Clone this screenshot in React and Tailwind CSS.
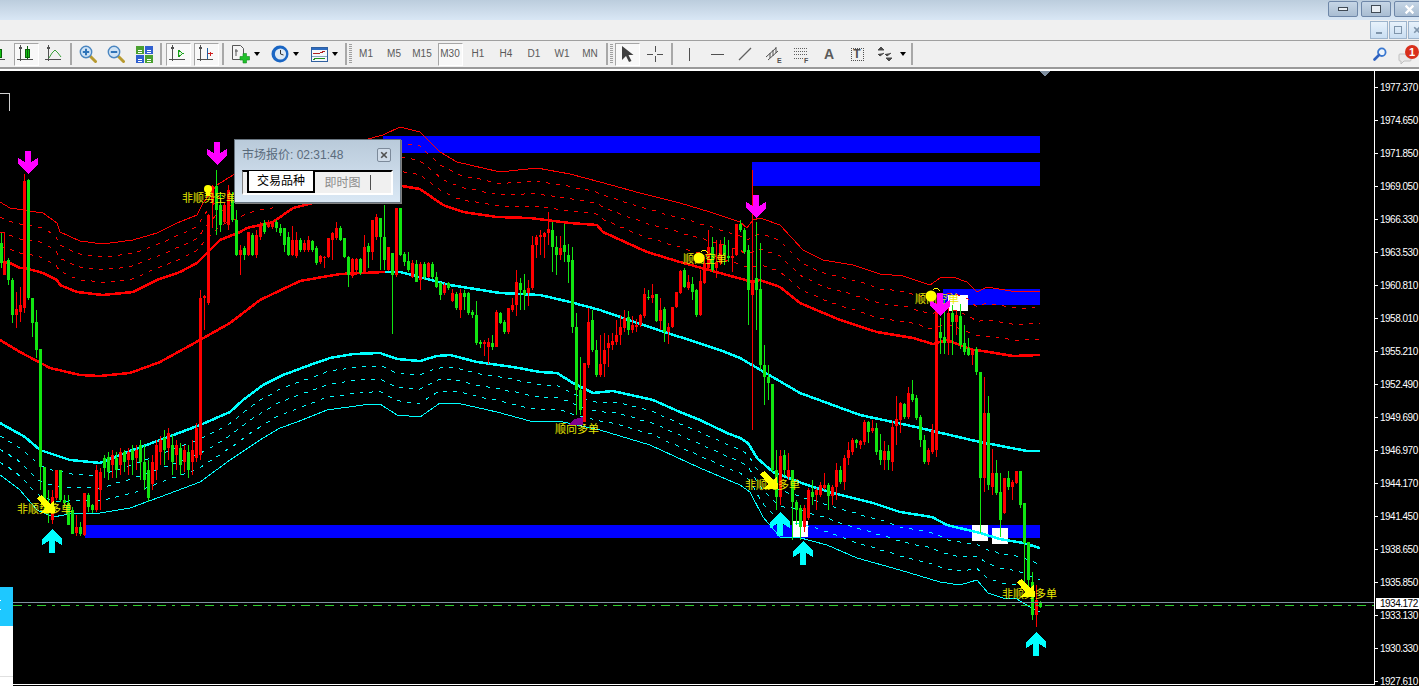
const prices = [
  '1977.370', '1974.650', '1971.850', '1969.050', '1966.330', '1963.530', '1960.810',
  '1958.010', '1955.210', '1952.490', '1949.690', '1946.970', '1944.170', '1941.450',
  '1938.650', '1935.850', '1933.130', '1930.330', '1927.610',
]

// band curves in page coordinates
const redThin = [[0,202],[10,208],[43,213],[57,223],[60,232],[80,241],[103,244],[133,240],[157,233],[177,223],[197,215],[203,203],[217,185],[233,175],[300,155],[364,140],[383,135],[400,127],[420,132],[440,152],[457,162],[500,172],[537,168],[570,174],[600,182],[640,193],[680,203],[710,212],[740,222],[747,228],[753,220],[760,218],[780,225],[803,250],[823,260],[853,265],[880,274],[903,276],[930,285],[940,278],[953,277],[967,282],[977,292],[987,287],[1017,292],[1040,291]]
const redThick = [[0,262],[10,263],[20,268],[25,268],[43,273],[57,280],[60,285],[77,292],[103,295],[133,292],[157,280],[180,272],[197,263],[207,253],[220,240],[240,232],[247,228],[273,222],[293,208],[313,203],[360,192],[402,186],[420,189],[443,205],[463,212],[497,217],[530,218],[570,223],[597,225],[603,232],[647,252],[680,262],[727,275],[753,282],[760,280],[780,287],[800,303],[840,320],[877,332],[913,338],[933,344],[947,340],[973,350],[983,351],[1013,356],[1040,355]]
const midRed = [[0,340],[20,352],[50,368],[80,375],[100,376],[130,373],[160,362],[200,340],[230,323],[260,300],[300,281],[340,274],[385,272]]
const midCyan = [[385,272],[400,272],[450,285],[500,293],[540,295],[570,302],[600,310],[640,324],[680,337],[720,350],[740,358],[800,393],[860,415],[907,425],[980,442],[1027,451],[1040,451]]
const cyanThick = [[0,423],[25,437],[40,450],[70,460],[100,463],[130,451],[160,440],[200,425],[230,412],[243,400],[263,385],[283,375],[310,365],[330,358],[353,354],[380,353],[397,359],[420,361],[437,356],[450,355],[477,362],[513,367],[540,372],[557,373],[573,383],[593,393],[613,391],[653,400],[680,412],[700,420],[727,433],[740,438],[748,443],[757,458],[773,472],[807,485],[833,493],[873,503],[900,512],[932,517],[947,525],[980,533],[1000,539],[1023,543],[1040,548]]
const cyanThin = [[0,475],[7,480],[20,490],[37,510],[53,517],[75,513],[100,513],[130,508],[160,497],[200,482],[230,460],[263,438],[280,428],[297,422],[327,410],[363,405],[380,404],[397,415],[420,417],[440,403],[457,403],[497,412],[530,421],[563,422],[600,430],[650,445],[700,468],[740,485],[750,492],[763,517],[780,537],[797,537],[827,545],[857,558],[900,570],[940,582],[960,585],[977,580],[988,593],[1003,598],[1017,599],[1030,607],[1040,612]]

// [x, green?, wick top, body top, body bottom, wick bottom]
const candles = [
  [1,1,233,243,263,268],[4,0,232,262,275,275],[8,1,258,260,280,285],[12,1,278,280,315,323],[16,0,292,309,315,328],[20,0,287,305,312,322],[24,0,174,181,308,313],[28,1,179,180,298,300],[32,1,298,298,323,337],[36,1,310,322,350,358],
  [40,1,349,349,467,490],[44,1,467,467,505,510],[48,1,490,505,513,523],[52,0,490,497,520,524],[56,0,470,470,498,500],[60,1,470,470,500,502],[64,1,495,500,503,507],[68,1,495,503,525,525],[72,1,507,510,534,534],[76,0,515,527,533,536],[80,1,522,527,534,536],[84,0,493,493,535,536],[88,1,493,495,507,512],[92,1,504,505,510,513],[96,0,465,470,510,512],
  [100,0,468,472,490,510],[104,1,455,458,468,478],[108,1,452,457,472,480],[112,0,450,455,465,478],[116,1,452,458,470,478],[120,0,448,452,465,475],[124,1,450,452,462,472],[128,0,448,452,460,475],[132,1,445,450,460,475],[136,0,445,450,458,470],[140,1,440,445,462,480],[144,1,445,462,480,490],[148,1,460,470,498,502],[152,0,455,462,484,490],[156,0,440,445,470,480],[160,0,436,440,452,465],[164,1,430,438,450,465],[168,0,428,433,448,460],[172,1,435,445,462,475],[176,0,440,445,455,470],[180,1,443,448,465,475],[184,0,445,450,462,472],[188,1,445,452,470,478],[192,0,440,450,462,475],[196,0,423,428,458,462],
  [200,0,290,298,455,460],[204,0,295,296,298,330],[208,0,214,215,303,305],[212,0,185,186,203,228],[216,1,170,186,210,235],[220,1,192,205,225,232],[224,0,203,205,222,224],[228,0,185,190,225,230],[232,1,192,200,220,222],[236,1,210,220,255,256],[240,0,245,250,255,275],[244,1,246,248,255,260],[248,0,232,232,255,256],[252,1,233,235,255,256],[256,0,230,235,255,258],[260,0,222,225,237,240],[264,1,220,223,232,234],[268,0,220,222,227,228],[272,0,222,223,227,229],[276,1,220,222,228,232],[280,1,224,228,233,236],[284,1,228,228,245,252],[288,1,232,237,255,256],[292,0,226,240,255,256],[296,0,232,240,256,258],[300,1,238,240,250,252],[304,0,240,243,250,252],[308,0,236,240,250,252],[312,1,240,241,250,252],[316,1,246,248,263,265],[320,0,255,256,262,264],[324,0,256,257,258,268],[328,0,238,238,257,258],[332,0,232,233,240,260],[336,0,222,228,238,240],[340,1,226,228,240,241],[344,1,238,238,257,258],[348,1,256,257,275,287],[352,0,258,259,276,278],[356,0,258,259,270,272],[360,1,258,259,273,275],[364,0,235,247,272,273],[368,1,243,246,252,268],[372,0,220,220,252,260],[376,0,214,217,237,240],[380,1,218,218,237,270],[384,1,205,237,260,270],[388,0,247,247,270,271],[392,1,253,253,275,334],[396,0,208,208,275,277],[400,1,208,208,255,256],[404,1,252,254,262,266],[408,1,252,261,270,272],[412,0,260,263,277,278],[416,1,260,264,282,282],[420,0,262,264,280,290],[424,1,262,264,277,280],[428,0,262,263,277,278],[432,1,262,264,277,279],[436,1,272,277,287,288],[440,1,282,283,295,300],[444,0,283,285,293,295],[448,1,282,283,288,290],[452,0,289,293,301,302],[456,1,292,294,308,310],[460,0,289,293,310,318],[464,1,290,293,297,310],[468,1,292,293,313,315],[472,1,310,312,315,318],[476,1,301,315,343,345],[480,1,340,342,344,348],[484,0,340,342,344,356],[488,0,338,342,347,364],[492,1,335,343,347,350],[496,0,310,312,347,347],[500,1,312,313,323,324],[504,1,320,322,332,334],[508,0,308,308,332,334],[512,0,298,305,310,312],[516,0,270,282,305,316],[520,1,278,283,290,310],[524,1,274,290,295,310],[528,0,280,288,293,306],[532,0,236,245,288,290],[536,0,235,237,245,258],[540,0,230,235,237,255],[544,0,232,233,237,258],[548,0,212,229,233,245],[552,1,222,230,247,272],[556,1,236,247,255,275],[560,0,236,248,255,260],[564,1,224,245,252,262],[568,1,244,255,262,283],
  [572,1,247,260,327,333],[576,1,313,327,390,415],[580,1,357,390,410,415],[584,0,363,363,422,422],[588,0,308,322,365,368],[592,1,310,320,350,352],[596,1,340,350,375,377],[600,0,335,364,375,377],[604,0,333,350,364,377],[608,0,335,343,348,367],[612,0,333,341,345,350],[616,0,320,335,342,345],[620,0,315,327,335,345],[624,0,310,318,328,332],[628,1,311,317,330,335],[632,0,316,325,330,333],[636,0,319,325,327,332],[640,0,314,315,325,327],[644,0,288,294,316,318],[648,1,290,297,298,300],[652,0,284,295,298,303],[656,1,294,294,321,322],[660,0,298,310,321,330],[664,1,307,309,332,342],[668,0,323,327,332,344],[672,0,307,307,327,328],[676,0,292,292,307,308],[680,0,270,271,293,294],[684,1,268,270,287,288],[688,0,275,282,288,290],[692,1,277,284,292,300],[696,1,289,290,315,317],[700,0,270,281,315,316],[704,0,257,263,283,284],[708,0,230,247,268,270],[712,1,237,247,270,272],[716,0,240,262,268,278],[720,0,240,244,263,265],[724,1,237,245,255,265],[728,1,240,256,258,262],[732,0,248,256,258,272],[736,0,224,224,255,256],[740,1,220,224,230,232],[744,1,228,230,252,254],[748,1,245,250,290,325],[752,0,170,280,295,430],[756,1,222,278,290,330],[760,1,243,289,365,370],[764,1,345,365,377,405],[768,1,365,377,383,400],[772,1,384,384,470,472],[776,1,450,470,497,510],[780,0,450,456,497,505],[784,1,450,455,470,476],[788,0,453,470,477,480],[792,1,470,470,502,540],[796,1,500,502,510,525],[800,1,505,508,527,540],[804,0,505,508,527,532],[808,0,488,490,518,520],[812,1,480,492,497,505],[816,0,488,490,495,510],[820,0,482,485,495,497],[824,0,473,485,488,490],[828,1,483,485,496,510],[832,0,485,487,496,505],[836,0,463,470,487,500],[840,1,466,470,482,484],[844,0,455,458,482,490],[848,0,442,450,458,465],[852,0,438,440,452,455],[856,1,439,440,443,448],[860,0,440,441,445,449],[864,0,420,422,442,445],[868,1,421,422,432,443],[872,0,420,428,431,433],[876,1,423,428,452,455],[880,1,434,450,460,465],[884,0,441,451,460,470],[888,1,445,451,460,470],[892,0,421,427,462,471],[896,0,396,419,426,445],[900,0,402,403,420,433],[904,1,403,404,417,419],[908,0,387,393,417,419],[912,1,380,394,400,402],[916,1,395,398,418,420],[920,1,415,417,440,447],[924,1,435,440,462,464],[928,0,448,450,462,465],[932,0,424,430,452,454],[936,0,303,307,450,457],
  [940,1,318,332,338,354],[944,1,300,337,343,354],[948,0,306,313,343,355],[952,1,305,313,322,355],[956,0,310,315,322,335],[960,1,304,316,345,349],[964,1,325,343,352,355],[968,1,338,348,355,356],[972,0,348,350,355,365],[976,1,347,349,372,375],[980,1,372,372,478,533],[984,0,377,413,478,492],[988,1,396,413,485,490],[992,0,449,473,487,495],[996,1,460,473,493,495],[1000,1,473,492,520,537],[1004,0,478,478,513,514],[1008,1,471,478,487,490],[1012,0,480,482,487,500],[1016,0,471,471,483,484],[1020,1,471,471,505,508],[1024,1,503,503,543,590],[1028,1,542,542,580,597],[1032,1,572,582,615,620],[1036,0,585,600,615,627],[1040,1,601,603,607,608],
]

const signals = [
  ['非顺势多单', 17, 513],
  ['非顺势空单', 182, 202],
  ['顺向空单', 683, 263],
  ['顺向多单', 555, 433],
  ['非顺势多单', 745, 489],
  ['顺向空单', 915, 303],
  ['非顺势多单', 1002, 598],
]

const toPts = (curve) => curve.map((p) => p.join(',')).join(' ')

const yAt = (curve, x) => {
  for (let i = 1; i < curve.length; i++) {
    if (x <= curve[i][0]) {
      const [x0, y0] = curve[i - 1]
      const [x1, y1] = curve[i]
      return y0 + ((y1 - y0) * (x - x0)) / (x1 - x0)
    }
  }
  return curve[curve.length - 1][1]
}

// dashed levels sit evenly between the thin and the thick line
const between = (a, b, t) => {
  const out = []
  for (let x = 0; x <= 1040; x += 4) out.push([x, Math.round(yAt(a, x) + (yAt(b, x) - yAt(a, x)) * t)])
  return out
}

const ArrowDown = ({ c, t }) => (
  <polygon fill="#ff00ff" points={`${c - 3},${t} ${c + 3},${t} ${c + 3},${t + 11} ${c + 10},${t + 7} ${c + 10},${t + 13} ${c},${t + 23} ${c - 10},${t + 13} ${c - 10},${t + 7} ${c - 3},${t + 11}`} />
)

const ArrowUp = ({ c, t }) => (
  <polygon fill="#00ffff" points={`${c - 3},${t + 24} ${c + 3},${t + 24} ${c + 3},${t + 12} ${c + 10},${t + 16} ${c + 10},${t + 10} ${c},${t} ${c - 10},${t + 10} ${c - 10},${t + 16} ${c - 3},${t + 12}`} />
)

const FatArrow = ({ x, y }) => (
  <polygon fill="#ffff00" points={`${x - 18},${y - 15} ${x - 13},${y - 18} ${x - 5},${y - 9} ${x - 1},${y - 13} ${x},${y} ${x - 15},${y} ${x - 10},${y - 5}`} />
)

const Chart = () => (
  <svg viewBox="0 71 1374 613" shapeRendering="crispEdges" className="block w-[1374px] h-[613px]">
    <rect x="383" y="136" width="657" height="17" fill="#0000ff" />
    <rect x="752" y="162" width="288" height="24" fill="#0000ff" />
    <rect x="943" y="289" width="97" height="16" fill="#0000ff" />
    <rect x="85" y="525" width="955" height="13" fill="#0000ff" />
    <rect x="792" y="521" width="16" height="16" fill="#fff" />
    <rect x="972" y="525" width="16" height="16" fill="#fff" />
    <rect x="992" y="528" width="16" height="16" fill="#fff" />
    <rect x="948" y="295" width="20" height="16" fill="#fff" />

    <path d="M0 93.5H9.5V111" fill="none" stroke="#d0d0d0" />
    <polygon points="1040,71 1050,71 1045,77" fill="#7f8fa0" />

    <polyline points={toPts(redThin)} fill="none" stroke="#ff0000" />
    <polyline points={toPts(between(redThin, redThick, 0.25))} fill="none" stroke="#ff0000" strokeDasharray="4 6" />
    <polyline points={toPts(between(redThin, redThick, 0.5))} fill="none" stroke="#ff0000" strokeDasharray="4 6" />
    <polyline points={toPts(between(redThin, redThick, 0.75))} fill="none" stroke="#ff0000" strokeDasharray="4 6" />
    <polyline points={toPts(redThick)} fill="none" stroke="#ff0000" strokeWidth="2.5" />
    <polyline points={toPts(midRed)} fill="none" stroke="#ff0000" strokeWidth="2.5" />
    <polyline points={toPts(midCyan)} fill="none" stroke="#00ffff" strokeWidth="2.5" />
    <polyline points={toPts(cyanThick)} fill="none" stroke="#00ffff" strokeWidth="2.5" />
    <polyline points={toPts(between(cyanThick, cyanThin, 0.25))} fill="none" stroke="#00ffff" strokeDasharray="4 6" />
    <polyline points={toPts(between(cyanThick, cyanThin, 0.5))} fill="none" stroke="#00ffff" strokeDasharray="4 6" />
    <polyline points={toPts(between(cyanThick, cyanThin, 0.75))} fill="none" stroke="#00ffff" strokeDasharray="4 6" />
    <polyline points={toPts(cyanThin)} fill="none" stroke="#00ffff" />

    {candles.map(([x, up, h, t, b, l]) => (
      <g key={x} fill={up ? '#12e612' : '#ff0000'}>
        <rect x={x} y={h} width="1" height={l - h} />
        <rect x={x - 1} y={t} width="3" height={Math.max(b - t, 1)} />
      </g>
    ))}

    <line x1="13" y1="602.5" x2="1374" y2="602.5" stroke="#8090a0" />
    <line x1="13" y1="605.5" x2="1374" y2="605.5" stroke="#32cd32" strokeDasharray="9 6 3 6" />

    {signals.map(([label, x, y]) => (
      <text key={x} x={x} y={y} fontSize="11" fill="#e8e800" shapeRendering="auto">{label}</text>
    ))}

    <polygon points="568,425 575,419 583,417 583,425" fill="#800090" />
    <ArrowDown c={28} t={151} />
    <ArrowDown c={217} t={142} />
    <ArrowDown c={756} t={195} />
    <ArrowDown c={940} t={293} />
    <ArrowUp c={52} t={529} />
    <ArrowUp c={780} t={512} />
    <ArrowUp c={803} t={541} />
    <ArrowUp c={1036} t={632} />
    <FatArrow x={55} y={513} />
    <FatArrow x={778} y={489} />
    <FatArrow x={1035} y={597} />
    <circle cx="699" cy="258" r="5.5" fill="#ffff00" shapeRendering="auto" />
    <circle cx="931" cy="296" r="5.5" fill="#ffff00" shapeRendering="auto" />
    <path d="M701 252q4-4 7 1M933 290q4-4 7 1" fill="none" stroke="#ffff00" />
    <circle cx="208" cy="189" r="4" fill="#ffff00" shapeRendering="auto" />
    <rect x="206" y="192" width="4" height="4" fill="#ffff00" />
  </svg>
)

const Axes = ({ children }) => (
  <svg viewBox="0 0 18 18" className="w-[18px] h-[18px]" shapeRendering="crispEdges">
    <path d="M3.5 1V16M0 14.5H16M2 3.5l1.5-2.5 1.5 2.5" fill="none" stroke="#505050" />
    {children}
  </svg>
)

const CandleIcon = () => (
  <Axes>
    <rect x="8" y="4" width="4" height="8" fill="#12c012" stroke="#0a600a" />
    <path d="M10 1V14" stroke="#0a600a" />
  </Axes>
)

const LineIcon = () => (
  <Axes>
    <path d="M4 13L7 8 10 5 13 8 16 12" fill="none" stroke="#38a038" strokeWidth="1" shapeRendering="auto" />
  </Axes>
)

const AutoScrollIcon = () => (
  <Axes>
    <polygon points="9,5 9,12 14,8.5" fill="#d8f0d8" stroke="#18a018" />
  </Axes>
)

const ShiftIcon = () => (
  <Axes>
    <path d="M10.5 3V14" stroke="#2060a0" />
    <path d="M11 8.5H16M13 6.5V10.5" stroke="#d02020" />
  </Axes>
)

const ZoomIcon = ({ plus }) => (
  <svg viewBox="0 0 18 18" className="w-[18px] h-[18px]">
    <path d="M11 11l5.5 5.5" stroke="#b89a30" strokeWidth="3" strokeLinecap="round" />
    <circle cx="7" cy="7" r="5.7" fill="#cfe3f5" stroke="#4a86c0" strokeWidth="1.4" />
    <path d={plus ? 'M3.8 7h6.4M7 3.8v6.4' : 'M3.8 7h6.4'} stroke="#2f74b8" strokeWidth="2" />
  </svg>
)

const TileIcon = () => (
  <svg viewBox="0 0 17 17" className="w-[17px] h-[17px]" shapeRendering="crispEdges">
    <rect x="0" y="0" width="8" height="8" fill="#4aa030" />
    <rect x="9" y="0" width="8" height="8" fill="#3060d0" />
    <rect x="0" y="9" width="8" height="8" fill="#3060d0" />
    <rect x="9" y="9" width="8" height="8" fill="#4aa030" />
    <path d="M2 4h4M2 6h4M11 4h4M11 6h4M2 13h4M2 15h4M11 13h4M11 15h4" stroke="#fff" />
  </svg>
)

const NewOrderIcon = () => (
  <svg viewBox="0 0 20 20" className="w-5 h-5">
    <path d="M1.5 1.5h8l3 3v11h-11z" fill="#f4f4f4" stroke="#555" />
    <path d="M5 5v7M4 7h3" stroke="#555" fill="none" />
    <path d="M9 12.5h3v-3h3.5v3h3v3.5h-3v3h-3.5v-3h-3z" fill="#1fc02a" stroke="#128a1b" strokeWidth="0.6" />
  </svg>
)

const ClockIcon = () => (
  <svg viewBox="0 0 18 18" className="w-[18px] h-[18px]">
    <circle cx="9" cy="9" r="8.5" fill="#1a66c4" />
    <circle cx="9.5" cy="9" r="5.6" fill="#dde9f4" />
    <path d="M9.5 5v4l3 1" fill="none" stroke="#333" />
  </svg>
)

const TemplateIcon = () => (
  <svg viewBox="0 0 17 15" className="w-[17px] h-[15px]" shapeRendering="crispEdges">
    <rect x="0.5" y="0.5" width="16" height="14" fill="#f4f8fc" stroke="#3060a0" />
    <rect x="1" y="1" width="15" height="2" fill="#2e6cc0" />
    <path d="M2 7l4-1 3 0 5-2" fill="none" stroke="#b02020" />
    <path d="M1 9h15" stroke="#8aa4c0" />
    <path d="M2 13l3-2 3 1 3-1 3 1" fill="none" stroke="#209020" />
  </svg>
)

const CloseMark = ({ color, size }) => (
  <svg viewBox="0 0 10 10" width={size} height={size} className="flex-none">
    <path d="M1.5 1.5l7 7M8.5 1.5l-7 7" stroke={color} strokeWidth="2" />
  </svg>
)

const Caret = () => <span className="w-0 h-0 border-x-[3px] border-x-transparent border-t-[4px] border-t-black" />

const Sep = () => (
  <div className="w-[6px] h-full flex justify-center items-center">
    <span className="w-[2px] h-[22px] bg-[#a8a8a8]" />
  </div>
)

const Grip = () => (
  <div className="w-[3px] h-full flex items-center">
    <span className="w-[3px] h-[20px] bg-[repeating-linear-gradient(#a0a0a0_0_1px,transparent_1px_2px)]" />
  </div>
)

// sunken look of a pressed toolbar button
const Btn = ({ active, children }) => (
  <div className="w-7 h-full flex-none flex items-center justify-center">
    {active ? (
      <div className="w-[25px] h-[23px] flex items-center justify-center border border-t-[#a6a6a6] border-l-[#a6a6a6] border-r-white border-b-white bg-[#f8f8f8]">
        {children}
      </div>
    ) : children}
  </div>
)

const Drop = ({ children }) => (
  <div className="w-[39px] h-full flex-none flex items-center pl-[5px] gap-[3px]">
    <div className="w-5 flex justify-center">{children}</div>
    <Caret />
  </div>
)

const Tf = ({ active, label }) => (
  <Btn active={active}>
    <span className="text-[10px] text-[#5a5a5a] leading-none">{label}</span>
  </Btn>
)

const WinBtn = ({ children }) => (
  <div className="w-[30px] h-[16px] flex-none flex items-center justify-center rounded-[2px] border border-[#6e87a8] bg-gradient-to-b from-[#c6d6e6] to-[#a9bdd2]">
    {children}
  </div>
)

const MdiBtn = ({ children }) => (
  <div className="w-[18px] h-[18px] flex-none flex items-center justify-center border border-[#9db4cc] bg-gradient-to-b from-[#e8f2fb] to-[#c9def2]">
    {children}
  </div>
)

const Toolbar = () => (
  <div className="h-[26px] flex items-center bg-[#f0f0f0] -ml-[16px]">
    <Btn><CandleIcon /></Btn>
    <Btn active><CandleIcon /></Btn>
    <Btn><LineIcon /></Btn>
    <Sep />
    <Btn><ZoomIcon plus /></Btn>
    <Btn><ZoomIcon /></Btn>
    <Btn><TileIcon /></Btn>
    <Sep />
    <Btn active><AutoScrollIcon /></Btn>
    <Btn active><ShiftIcon /></Btn>
    <Sep />
    <Drop><NewOrderIcon /></Drop>
    <Drop><ClockIcon /></Drop>
    <Drop><TemplateIcon /></Drop>
    <Sep />
    <Grip />
    <Tf label="M1" />
    <Tf label="M5" />
    <Tf label="M15" />
    <Tf label="M30" active />
    <Tf label="H1" />
    <Tf label="H4" />
    <Tf label="D1" />
    <Tf label="W1" />
    <Tf label="MN" />
    <Sep />
    <Grip />
    <Btn active>
      <svg viewBox="0 0 14 18" className="w-[14px] h-[18px]"><path d="M2 1v14l4-4 3 6 2.5-1-3-6h5z" fill="#404040" /></svg>
    </Btn>
    <Btn>
      <svg viewBox="0 0 16 16" className="w-4 h-4" shapeRendering="crispEdges"><path d="M8 0v6M8 10v6M0 8h6M10 8h6" stroke="#505050" /></svg>
    </Btn>
    <Sep />
    <Btn><span className="w-px h-[13px] bg-[#505050]" /></Btn>
    <Btn><span className="w-[13px] h-px bg-[#505050]" /></Btn>
    <Btn>
      <svg viewBox="0 0 14 14" className="w-[14px] h-[14px]"><path d="M1 13L13 1" stroke="#606060" strokeWidth="1.2" /></svg>
    </Btn>
    <Btn>
      <svg viewBox="0 0 17 17" className="w-[17px] h-[17px]">
        <path d="M1 11L11 2M3 14L13 5M5 12V7M8 10V4M11 7V1" stroke="#505050" fill="none" />
        <text x="12" y="16.5" fontSize="7" fontWeight="700" fill="#505050">E</text>
      </svg>
    </Btn>
    <Btn>
      <svg viewBox="0 0 17 17" className="w-[17px] h-[17px]" shapeRendering="crispEdges">
        <path d="M1 2h13M1 5h13M1 8h13M1 12h9" stroke="#606060" strokeDasharray="1 1" />
        <text x="11" y="16.5" fontSize="7" fontWeight="700" fill="#505050">F</text>
      </svg>
    </Btn>
    <Btn><span className="text-[14px] leading-none font-bold text-[#5a5a5a]">A</span></Btn>
    <Btn>
      <div className="w-[13px] h-[13px] border border-dotted border-[#505050] flex items-center justify-center text-[12px] leading-none font-bold text-[#505050]">T</div>
    </Btn>
    <div className="w-[40px] h-full flex-none flex items-center pl-[6px] gap-[7px]">
      <svg viewBox="0 0 16 14" className="w-4 h-[14px]"><path d="M4 0l3 3H1zM12 14l3-3H9zM1 7l2 2 4-3M8 7l2 2 4-3" fill="#4a4a4a" stroke="#4a4a4a" /></svg>
      <Caret />
    </div>
    <span className="w-[2px] h-[22px] flex-none bg-[#a8a8a8]" />
    <div className="flex-1" />
    <svg viewBox="0 0 14 14" className="w-[14px] h-[14px] flex-none">
      <circle cx="8.8" cy="5.2" r="3.8" fill="#eef5fc" stroke="#3a78d0" strokeWidth="1.8" />
      <path d="M6 8L1.5 12.5" stroke="#2f62c0" strokeWidth="2.6" strokeLinecap="round" />
    </svg>
    <div className="relative w-[21px] h-full ml-[11px] flex-none">
      <svg viewBox="0 0 14 12" className="absolute left-0 bottom-[2px] w-[14px] h-[12px]"><path d="M2 1h10q1 0 1 1v5q0 1-1 1H6L3 11V8H2q-1 0-1-1V2q0-1 1-1z" fill="#e8e8e8" stroke="#c0c0c0" /></svg>
      <span className="absolute left-[7px] top-[4px] w-[14px] h-[14px] rounded-full bg-[#d8301c] text-white text-[11px] font-bold leading-[14px] text-center">1</span>
    </div>
  </div>
)

const QuoteWindow = () => (
  <div className="absolute left-[234px] top-[68px] w-[167px] h-[64px] border border-[#68747f] bg-gradient-to-b from-[#b9cada] to-[#dae8f5] pl-[7px] pr-[7px] shadow-[1px_1px_0_#808080]">
    <div className="h-[30px] flex items-center justify-between pr-[2px]">
      <span className="text-[12px] text-[#5a6b7c]">市场报价: 02:31:48</span>
      <div className="w-[14px] h-[14px] flex items-center justify-center rounded-[2px] border border-[#7c8a9a] bg-[#cfdbe8]">
        <CloseMark color="#505050" size={8} />
      </div>
    </div>
    <div className="w-[151px] h-[25px] flex bg-[#f0f0f0] border-t-2 border-t-black border-l border-l-[#808080] border-b-2 border-b-white border-r-2 border-r-white">
      <div className="w-[68px] h-[22px] -mt-[1px] ml-[4px] flex items-center justify-center bg-white border-l-2 border-r-2 border-b-2 border-black text-[12px] text-black">交易品种</div>
      <div className="w-[55px] flex items-center justify-center text-[12px] text-[#8c8c8c]">即时图</div>
      <span className="w-px h-[15px] mt-[3px] bg-[#505050]" />
    </div>
  </div>
)

export default function App() {
  return (
    <div className="w-[1419px] h-[686px] overflow-hidden bg-black font-['Liberation_Sans','Noto_Sans_CJK_SC',sans-serif]">
      <div className="h-[20px] flex items-start gap-[3px] pt-px pl-[1328px] bg-gradient-to-b from-[#bccddd] to-[#d9e7f5]">
        <WinBtn><span className="w-[10px] h-[4px] border border-[#404a55] bg-[#e8eef4]" /></WinBtn>
        <WinBtn><span className="w-[10px] h-[8px] border-[1.5px] border-[#404a55] bg-[#e8eef4]" /></WinBtn>
        <WinBtn><CloseMark color="#ffffff" size={11} /></WinBtn>
      </div>
      <div className="h-[20px] flex items-center gap-px pl-[1370px] bg-[#f0f0f0]">
        <MdiBtn><span className="w-[6px] h-[2px] mt-[6px] bg-[#7f95ab]" /></MdiBtn>
        <MdiBtn><span className="w-[8px] h-[8px] border border-[#7f95ab]" /></MdiBtn>
        <MdiBtn><CloseMark color="#7f95ab" size={8} /></MdiBtn>
      </div>
      <div className="h-px bg-[#a0a0a0]" />
      <Toolbar />
      <div className="h-[2px] bg-[#9a9a9a]" />
      <div className="h-[2px] bg-white" />
      <div className="flex">
        <div className="relative w-[1375px] h-[614px] flex-none border-r border-b border-white">
          <Chart />
          <QuoteWindow />
          <div className="absolute left-0 top-[516px] w-[13px] h-[99px] flex flex-col bg-white">
            <div className="h-[39px] flex flex-col gap-[8px] pt-[13px] bg-[#1ec8ff]">
              <span className="w-px h-px bg-white" />
              <span className="w-px h-px bg-white" />
            </div>
            <div className="h-px mt-[50px] bg-[#e0e0e0]" />
          </div>
        </div>
        <div className="relative w-[44px] flex-none text-[10px] tracking-[-0.5px] text-white">
          {prices.map((p) => (
            <div key={p} className="h-[33px] flex items-center gap-[2px]">
              <span className="w-[3px] h-px bg-white" />
              <span>{p}</span>
            </div>
          ))}
          <div className="absolute left-[1px] top-[527px] w-[43px] h-[11px] flex items-center pl-[4px] bg-white text-black">1934.172</div>
        </div>
      </div>
    </div>
  )
}
